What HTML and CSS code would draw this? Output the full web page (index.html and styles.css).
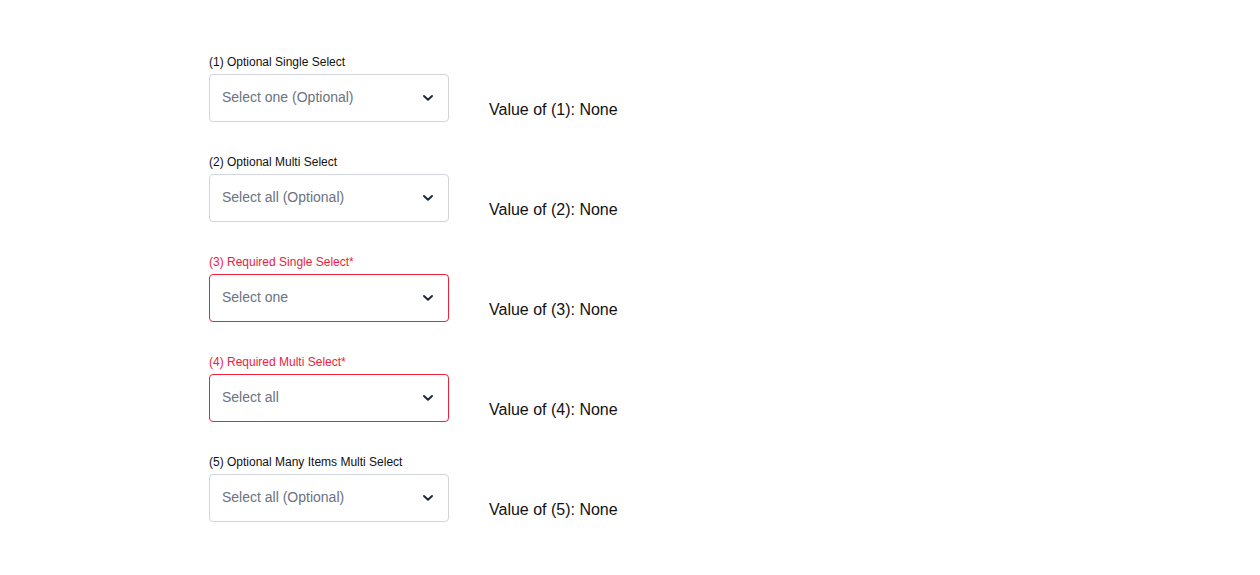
FILE: index.html
```html
<!DOCTYPE html>
<html>
<head>
<meta charset="utf-8">
<link rel="stylesheet" href="styles.css">
</head>
<body>
<div class="page">
  <div class="row">
    <div class="field">
      <div class="label">(1) Optional Single Select</div>
      <div class="select"><span class="ph">Select one (Optional)</span><svg class="chev" width="12" height="8" viewBox="0 0 12 8"><path d="M2 2 L6 5.8 L10 2" fill="none" stroke="#1f2937" stroke-width="2" stroke-linecap="round" stroke-linejoin="round"/></svg></div>
    </div>
    <div class="value">Value of (1): None</div>
  </div>
  <div class="row">
    <div class="field">
      <div class="label">(2) Optional Multi Select</div>
      <div class="select"><span class="ph">Select all (Optional)</span><svg class="chev" width="12" height="8" viewBox="0 0 12 8"><path d="M2 2 L6 5.8 L10 2" fill="none" stroke="#1f2937" stroke-width="2" stroke-linecap="round" stroke-linejoin="round"/></svg></div>
    </div>
    <div class="value">Value of (2): None</div>
  </div>
  <div class="row">
    <div class="field">
      <div class="label req">(3) Required Single Select*</div>
      <div class="select err"><span class="ph">Select one</span><svg class="chev" width="12" height="8" viewBox="0 0 12 8"><path d="M2 2 L6 5.8 L10 2" fill="none" stroke="#1f2937" stroke-width="2" stroke-linecap="round" stroke-linejoin="round"/></svg></div>
    </div>
    <div class="value">Value of (3): None</div>
  </div>
  <div class="row">
    <div class="field">
      <div class="label req">(4) Required Multi Select*</div>
      <div class="select err"><span class="ph">Select all</span><svg class="chev" width="12" height="8" viewBox="0 0 12 8"><path d="M2 2 L6 5.8 L10 2" fill="none" stroke="#1f2937" stroke-width="2" stroke-linecap="round" stroke-linejoin="round"/></svg></div>
    </div>
    <div class="value">Value of (4): None</div>
  </div>
  <div class="row">
    <div class="field">
      <div class="label">(5) Optional Many Items Multi Select</div>
      <div class="select"><span class="ph">Select all (Optional)</span><svg class="chev" width="12" height="8" viewBox="0 0 12 8"><path d="M2 2 L6 5.8 L10 2" fill="none" stroke="#1f2937" stroke-width="2" stroke-linecap="round" stroke-linejoin="round"/></svg></div>
    </div>
    <div class="value">Value of (5): None</div>
  </div>
</div>
</body>
</html>
```
FILE: styles.css
```css
html, body {
  margin: 0;
  padding: 0;
  background: #ffffff;
  font-family: "Liberation Sans", Arial, sans-serif;
}
.page {
  padding: 56px 0 0 209px;
  display: flex;
  flex-direction: column;
  gap: 34px;
}
.row {
  display: flex;
  align-items: flex-end;
  gap: 40px;
}
.field {
  display: flex;
  flex-direction: column;
  gap: 6px;
  width: 240px;
}
.label {
  font-size: 12px;
  line-height: 12px;
  color: #111111;
}
.label.req {
  color: #f0203a;
}
.select {
  box-sizing: border-box;
  height: 48px;
  border: 1px solid #d1d5db;
  border-radius: 4px;
  display: flex;
  align-items: center;
  justify-content: space-between;
  padding: 0 14px 2px 12px;
}
.select.err {
  border-color: #f0203a;
}
.ph {
  font-size: 14px;
  color: #6b7280;
}
.chev {
  display: block;
  margin-top: 2px;
}
.value {
  font-size: 16px;
  line-height: 24px;
  color: #111111;
}
```
